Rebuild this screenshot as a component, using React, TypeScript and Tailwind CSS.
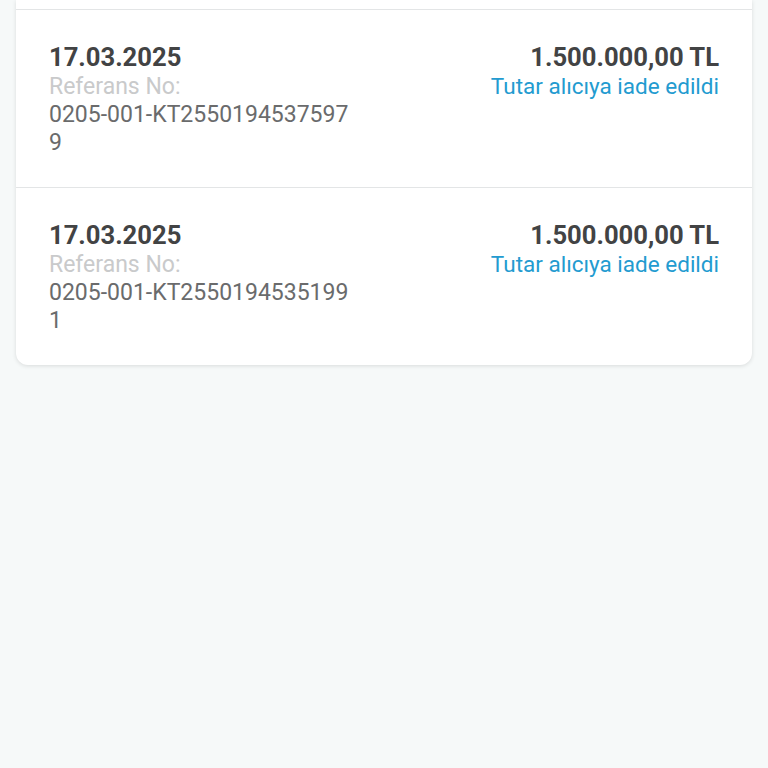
const rows = [
  { date: '17.03.2025', ref: '0205-001-KT25501945375979', amount: '1.500.000,00 TL', status: 'Tutar alıcıya iade edildi' },
  { date: '17.03.2025', ref: '0205-001-KT25501945351991', amount: '1.500.000,00 TL', status: 'Tutar alıcıya iade edildi' },
];

export default function App() {
  return (
    <div className="min-h-[768px] w-full bg-[#f6f9f9] px-4 font-['Roboto',sans-serif]">
      <div className="rounded-b-xl bg-white shadow-[0_1px_4px_rgba(0,0,0,0.12)]">
        {/* tail of the previous row, cut off by the top of the screen */}
        <div className="h-[9px]" />
        {rows.map((row, i) => (
          <div key={i} className="flex justify-between border-t border-[#e3e5e6] pl-[33px] pr-[33px] pt-8 pb-[30px]">
            <div className="w-[300px]">
              <div className="text-[25.6px] leading-[30px] font-bold text-[#424344]">{row.date}</div>
              <div className="text-[23px] leading-[29px] text-[#c9cacb]">Referans No:</div>
              <div className="break-all text-[23px] leading-[28px] text-[#6a6b6c]">{row.ref}</div>
            </div>
            <div className="flex flex-col items-end">
              <div className="text-[25.6px] leading-[30px] font-bold text-[#424344]">{row.amount}</div>
              <div className="text-[22.5px] leading-[29px] text-[#239bd0]">{row.status}</div>
            </div>
          </div>
        ))}
      </div>
    </div>
  );
}
